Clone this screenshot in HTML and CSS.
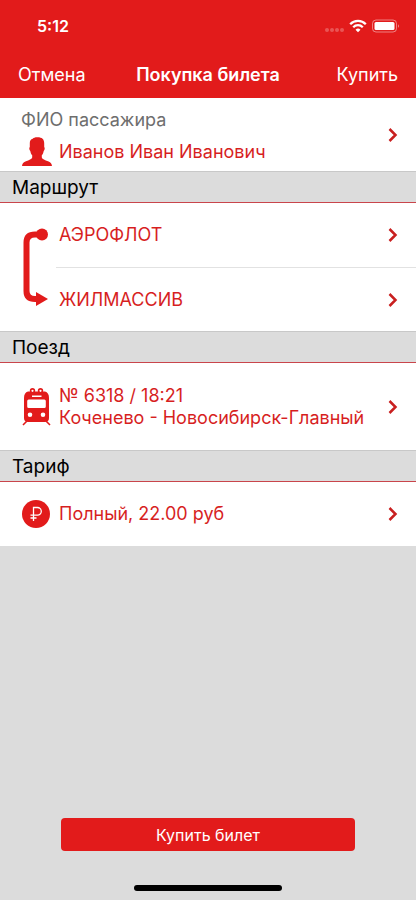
FILE: index.html
```html
<!DOCTYPE html>
<html lang="ru">
<head>
<meta charset="utf-8">
<meta name="viewport" content="width=device-width, initial-scale=1">
<title>Покупка билета</title>
<link rel="stylesheet" href="styles.css">
</head>
<body>
<div class="app">
  <header class="top">
    <div class="status">
      <span class="time">5:12</span>
      <svg class="status-icons" width="76" height="16" viewBox="0 0 76 16" aria-hidden="true">
        <g fill="#fff" opacity=".25"><circle cx="3" cy="12" r="2"/><circle cx="8" cy="12" r="2"/><circle cx="13" cy="12" r="2"/><circle cx="18" cy="12" r="2"/></g>
        <g fill="none" stroke="#fff" stroke-width="2.3"><path d="M26.2 6.2a11 11 0 0 1 15.6 0"/><path d="M29.2 9.2a6.8 6.8 0 0 1 9.6 0"/></g>
        <path d="M34 14.2l-2.5-2.5a3.6 3.6 0 0 1 5 0z" fill="#fff"/>
        <rect x="48.500" y="2" width="24" height="12" rx="3.500" fill="none" stroke="#fff" opacity=".45"/>
        <rect x="50.500" y="4" width="20" height="8" rx="1.5" fill="#fff"/>
        <path d="M74 6.200q2 1.800 0 3.600z" fill="#fff" opacity=".5"/>
      </svg>
    </div>
    <nav class="nav">
      <button class="nav-btn" type="button">Отмена</button>
      <h1 class="title">Покупка билета</h1>
      <button class="nav-btn nav-end" type="button">Купить</button>
    </nav>
  </header>

  <main class="content">
    <button class="row passenger" type="button">
      <span class="person">
        <span class="caption">ФИО пассажира</span>
        <span class="person-line">
          <svg class="icon" width="32" height="30" viewBox="0 0 32 30" aria-hidden="true"><path fill="#e21b1b" d="M16 .3c4.800-.2 7.200 1.800 7.200 6v3.700c.8.400.7 3.200-.5 3.900-.3 1.800-.9 3.200-1.900 4.300v2.400c.5 1.900 3.200 2.500 6.200 3.700 2.500 1 3.700 2.200 4 4.700H1c.3-2.500 1.500-3.700 4-4.700 3-1.200 5.700-1.800 6.200-3.700v-2.400c-1-1.100-1.600-2.500-1.900-4.300-1.200-.7-1.300-3.500-.5-3.900V6c0-2.200 1-3.700 2.900-4.200C12.800.8 14 .3 16 .3z"/></svg>
          <span>Иванов Иван Иванович</span>
        </span>
      </span>
      <svg class="chevron" width="10" height="16" viewBox="0 0 10 16" aria-hidden="true"><path d="M1.500 2l6 6-6 6"/></svg>
    </button>

    <h2 class="section">Маршрут</h2>
    <div class="route">
      <svg class="route-icon" width="28" height="80" viewBox="0 0 28 80" aria-hidden="true">
        <path d="M20 7.500h-6Q5.500 7.500 5.500 15.500v48.500q0 8 8.500 8h3" fill="none" stroke="#e21b1b" stroke-width="6"/>
        <circle cx="21" cy="7.500" r="6" fill="#e21b1b"/>
        <path d="M15 65l12 7-12 7z" fill="#e21b1b"/>
      </svg>
      <div class="stops">
        <button class="row stop" type="button"><span>АЭРОФЛОТ</span><svg class="chevron" width="10" height="16" viewBox="0 0 10 16" aria-hidden="true"><path d="M1.500 2l6 6-6 6"/></svg></button>
        <button class="row stop" type="button"><span>ЖИЛМАССИВ</span><svg class="chevron" width="10" height="16" viewBox="0 0 10 16" aria-hidden="true"><path d="M1.500 2l6 6-6 6"/></svg></button>
      </div>
    </div>

    <h2 class="section">Поезд</h2>
    <button class="row train" type="button">
      <svg class="icon" width="32" height="38" viewBox="0 0 32 38" aria-hidden="true">
        <path fill="#e21b1b" fill-rule="evenodd" d="M7 3.500h17q4 1 4 6.500v20q0 4-4 4H7q-4 0-4-4V10q0-5.500 4-6.500zM11 9h9.500V7.400H11zM7.700 11.500q-1.500 0-1.500 1.500v5.500q0 1.500 1.500 1.500h15.600q1.500 0 1.500-1.500V13q0-1.500-1.500-1.500zM9 24.500a2.300 2.300 0 1 0 0 4.600 2.300 2.300 0 0 0 0-4.600zM22 24.500a2.300 2.300 0 1 0 0 4.600 2.300 2.300 0 0 0 0-4.600z"/>
        <g fill="#fff" stroke="#e21b1b" stroke-width="1.600"><circle cx="11.500" cy="2.800" r="1.900"/><circle cx="19.500" cy="2.800" r="1.900"/></g>
        <path d="M6 33l-4 4M25 33l4 4" stroke="#e21b1b" stroke-width="1.600"/>
      </svg>
      <span class="label">№ 6318 / 18:21<br>Коченево - Новосибирск-Главный</span>
      <svg class="chevron" width="10" height="16" viewBox="0 0 10 16" aria-hidden="true"><path d="M1.500 2l6 6-6 6"/></svg>
    </button>

    <h2 class="section">Тариф</h2>
    <button class="row fare" type="button">
      <svg class="icon" width="32" height="28" viewBox="0 0 32 28" aria-hidden="true"><circle cx="15" cy="14" r="14" fill="#e21b1b"/><path d="M12.500 21V7.500h4a3.800 3.800 0 0 1 0 7.600H9.500M9.500 18h6" fill="none" stroke="#fff" stroke-width="1.300"/></svg>
      <span class="label">Полный, 22.00 руб</span>
      <svg class="chevron" width="10" height="16" viewBox="0 0 10 16" aria-hidden="true"><path d="M1.500 2l6 6-6 6"/></svg>
    </button>
  </main>

  <footer class="bottom">
    <button class="buy" type="button">Купить билет</button>
    <div class="home"></div>
  </footer>
</div>
</body>
</html>
```
FILE: styles.css
```css
* {
  box-sizing: border-box;
}

body {
  margin: 0;
  background: #dcdcdc;
  font-family: Inter, "Liberation Sans", sans-serif;
  font-size: 18px;
  color: #000;
}

button {
  margin: 0;
  border: 0;
  padding: 0;
  background: none;
  font: inherit;
  color: inherit;
  text-align: left;
}

svg {
  display: block;
  flex: none;
}

.app {
  display: flex;
  flex-direction: column;
  min-height: 100vh;
}

.top {
  background: #e21b1b;
  color: #fff;
}

.status {
  display: flex;
  align-items: center;
  justify-content: space-between;
  height: 50px;
  padding: 2px 16px 0 37px;
}

.time {
  font-size: 16px;
  font-weight: 600;
}

.nav {
  display: grid;
  grid-template-columns: 1fr auto 1fr;
  align-items: center;
  height: 48px;
  padding: 0 18px;
}

.nav-end {
  justify-self: end;
}

.title {
  margin: 0;
  font-size: 18px;
  font-weight: 600;
}

.row {
  display: flex;
  align-items: center;
  width: 100%;
  padding: 0 18px 0 21px;
  background: #fff;
  color: #d71f1f;
  line-height: 22px;
}

.icon {
  margin-right: 6px;
}

.chevron {
  margin-left: auto;
  fill: none;
  stroke: #c92020;
  stroke-width: 2.5px;
}

.passenger {
  padding-top: 4px;
  padding-bottom: 4px;
}

.caption {
  display: block;
  color: #6e6e6e;
  line-height: 35px;
}

.person-line {
  display: flex;
  align-items: center;
}

.section {
  margin: 0;
  height: 32px;
  padding: 0 12px;
  border-top: 1px solid #c8c8c8;
  border-bottom: 1px solid #c9454b;
  font-size: 19px;
  font-weight: 400;
  line-height: 31px;
}

.route {
  display: flex;
  align-items: center;
  padding-left: 21px;
  background: #fff;
}

.route-icon {
  margin-right: 7px;
}

.stops {
  flex: 1;
}

.stop {
  height: 64px;
  padding-left: 3px;
}

.stop + .stop {
  border-top: 1px solid #e2e2e2;
}

.train {
  height: 87px;
}

.fare {
  height: 64px;
}

.bottom {
  margin-top: auto;
  padding: 0 61px 9px;
}

.buy {
  display: block;
  width: 100%;
  height: 33px;
  border-radius: 4px;
  background: #e21b1b;
  color: #fff;
  font-size: 16px;
  text-align: center;
}

.home {
  width: 148px;
  height: 6px;
  margin: 34px auto 0;
  border-radius: 3px;
  background: #000;
}
```
